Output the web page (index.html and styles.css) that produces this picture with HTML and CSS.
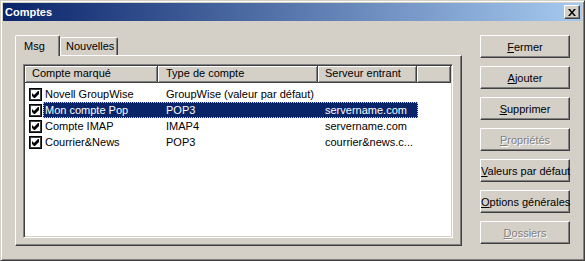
FILE: index.html
```html
<!DOCTYPE html>
<html lang="fr">
<head>
  <meta charset="UTF-8" />
  <title>Comptes</title>
  <link rel="stylesheet" href="styles.css">
</head>
<body>
  <div class="window">
    <div class="titlebar">
      <span class="title">Comptes</span>
      <button class="close-btn">
        <svg width="8" height="7" viewBox="0 0 8 7"><path d="M0 0h2l2 2.5L6 0h2L5 3.5 8 7H6L4 4.5 2 7H0l3-3.5z" fill="#000"/></svg>
      </button>
    </div>

    <div class="dialog">
      <div class="tabs-area">
        <div class="tab-strip">
          <div class="tab active">Msg</div>
          <div class="tab">Nouvelles</div>
        </div>
        <div class="tab-panel">
          <div class="listview">
            <div class="lv-header">
              <div class="hd hd-name">Compte marqué</div>
              <div class="hd hd-type">Type de compte</div>
              <div class="hd hd-server">Serveur entrant</div>
              <div class="hd hd-rest"></div>
            </div>
            <div class="lv-rows">
              <div class="lv-row">
                <span class="check"><svg width="7" height="7" viewBox="0 0 7 7"><path d="M6 0h1v3L3 7H2L0 5V2l2 2z" fill="#000"/></svg></span>
                <span class="cells">
                  <span class="cell c-name">Novell GroupWise</span>
                  <span class="cell c-type">GroupWise (valeur par défaut)</span>
                  <span class="cell c-server"></span>
                </span>
              </div>
              <div class="lv-row">
                <span class="check"><svg width="7" height="7" viewBox="0 0 7 7"><path d="M6 0h1v3L3 7H2L0 5V2l2 2z" fill="#000"/></svg></span>
                <span class="cells selected">
                  <span class="cell c-name">Mon compte Pop</span>
                  <span class="cell c-type">POP3</span>
                  <span class="cell c-server">servername.com</span>
                </span>
              </div>
              <div class="lv-row">
                <span class="check"><svg width="7" height="7" viewBox="0 0 7 7"><path d="M6 0h1v3L3 7H2L0 5V2l2 2z" fill="#000"/></svg></span>
                <span class="cells">
                  <span class="cell c-name">Compte IMAP</span>
                  <span class="cell c-type">IMAP4</span>
                  <span class="cell c-server">servername.com</span>
                </span>
              </div>
              <div class="lv-row">
                <span class="check"><svg width="7" height="7" viewBox="0 0 7 7"><path d="M6 0h1v3L3 7H2L0 5V2l2 2z" fill="#000"/></svg></span>
                <span class="cells">
                  <span class="cell c-name">Courrier&amp;News</span>
                  <span class="cell c-type">POP3</span>
                  <span class="cell c-server">courrier&amp;news.c...</span>
                </span>
              </div>
            </div>
          </div>
        </div>
      </div>

      <div class="buttons">
        <button class="btn"><u>F</u>ermer</button>
        <button class="btn"><u>A</u>jouter</button>
        <button class="btn"><u>S</u>upprimer</button>
        <button class="btn disabled"><u>P</u>ropriétés</button>
        <button class="btn"><u>V</u>aleurs par défaut</button>
        <button class="btn"><u>O</u>ptions générales</button>
        <button class="btn disabled"><u>D</u>ossiers</button>
      </div>
    </div>
  </div>
</body>
</html>
```

FILE: styles.css
```css
* {
  box-sizing: border-box;
}
body {
  margin: 0;
  font-family: "Liberation Sans", Arial, sans-serif;
  font-size: 11px;
  color: #000;
  background: #d4d0c8;
}
.window {
  width: 585px;
  height: 261px;
  background: #d4d0c8;
  border: 1px solid;
  border-color: #d4d0c8 #404040 #404040 #d4d0c8;
  box-shadow: inset 1px 1px #fff, inset -1px -1px #808080;
  padding: 2px;
  display: flex;
  flex-direction: column;
}
.titlebar {
  height: 18px;
  background: linear-gradient(to right, #0a246a, #a6caf0);
  display: flex;
  align-items: center;
  justify-content: space-between;
  padding: 0 2px;
}
.title {
  color: #fff;
  font-weight: bold;
  font-size: 11px;
}
.close-btn {
  width: 16px;
  height: 14px;
  padding: 0;
  background: #d4d0c8;
  border: 1px solid;
  border-color: #fff #404040 #404040 #fff;
  box-shadow: inset -1px -1px #808080;
  display: flex;
  align-items: center;
  justify-content: center;
}
.close-btn svg {
  margin-left: -1px;
}

.dialog {
  flex: 1;
  display: flex;
  gap: 18px;
  padding: 14px 12px 0 12px;
}
.tabs-area {
  width: 447px;
  display: flex;
  flex-direction: column;
}
.tab-strip {
  height: 20px;
  display: flex;
  align-items: flex-end;
}
.tab {
  height: 18px;
  background: #d4d0c8;
  border-top: 1px solid #fff;
  border-left: 1px solid #fff;
  border-right: 1px solid #404040;
  box-shadow: inset -1px 0 #808080;
  border-radius: 2px 2px 0 0;
  padding: 2px 0 0 5px;
  width: 58px;
  line-height: 13px;
}
.tab.active {
  width: 45px;
  height: 21px;
  margin-bottom: -1px;
  position: relative;
  z-index: 1;
  padding: 4px 0 0 8px;
}
.tab-panel {
  height: 191px;
  border-top: 1px solid #fff;
  border-left: 1px solid #fff;
  border-right: 1px solid #404040;
  border-bottom: 1px solid #404040;
  box-shadow: inset -1px -1px #808080;
  padding: 8px 8px 7px 7px;
  display: flex;
}
.listview {
  flex: 1;
  background: #fff;
  border: 1px solid;
  border-color: #808080 #fff #fff #808080;
  box-shadow: inset 1px 1px #404040, inset -1px -1px #d4d0c8;
  padding: 1px;
  overflow: hidden;
}
.lv-header {
  display: flex;
  height: 17px;
}
.hd {
  background: #d4d0c8;
  border-right: 1px solid #404040;
  border-bottom: 1px solid #404040;
  box-shadow: inset 1px 1px #fff, inset -1px -1px #808080;
  padding: 0 0 0 7px;
  line-height: 15px;
  white-space: nowrap;
}
.hd-name { width: 133px; }
.hd-type { width: 160px; padding-left: 8px; }
.hd-server { width: 99px; }
.hd-rest { flex: 1; }

.lv-rows {
  padding-top: 3px;
}
.lv-row {
  display: flex;
  align-items: center;
  height: 16px;
  padding-left: 4px;
}
.check {
  width: 13px;
  height: 13px;
  border: 1px solid #000;
  box-shadow: inset 0 0 0 1px #404040;
  background: #fff;
  display: flex;
  align-items: center;
  justify-content: center;
  margin-right: 1px;
}
.cells {
  display: flex;
  height: 16px;
  line-height: 16px;
}
.cells.selected {
  background: #0a246a;
  color: #fff;
  outline: 1px dotted #e8d070;
  outline-offset: -1px;
}
.cell {
  white-space: nowrap;
  overflow: hidden;
}
.c-name { width: 115px; padding-left: 2px; }
.c-type { width: 160px; padding-left: 8px; }
.c-server { width: 100px; padding-left: 7px; }

.buttons {
  width: 90px;
  display: flex;
  flex-direction: column;
  gap: 8px;
}
.btn {
  height: 23px;
  width: 90px;
  padding: 0;
  background: #d4d0c8;
  font-family: "Liberation Sans", Arial, sans-serif;
  font-size: 11px;
  color: #000;
  border: 1px solid;
  border-color: #fff #404040 #404040 #fff;
  box-shadow: inset -1px -1px #808080;
  white-space: nowrap;
  text-align: center;
}
.btn.disabled {
  color: #808080;
  text-shadow: 1px 1px #fff;
}
```
